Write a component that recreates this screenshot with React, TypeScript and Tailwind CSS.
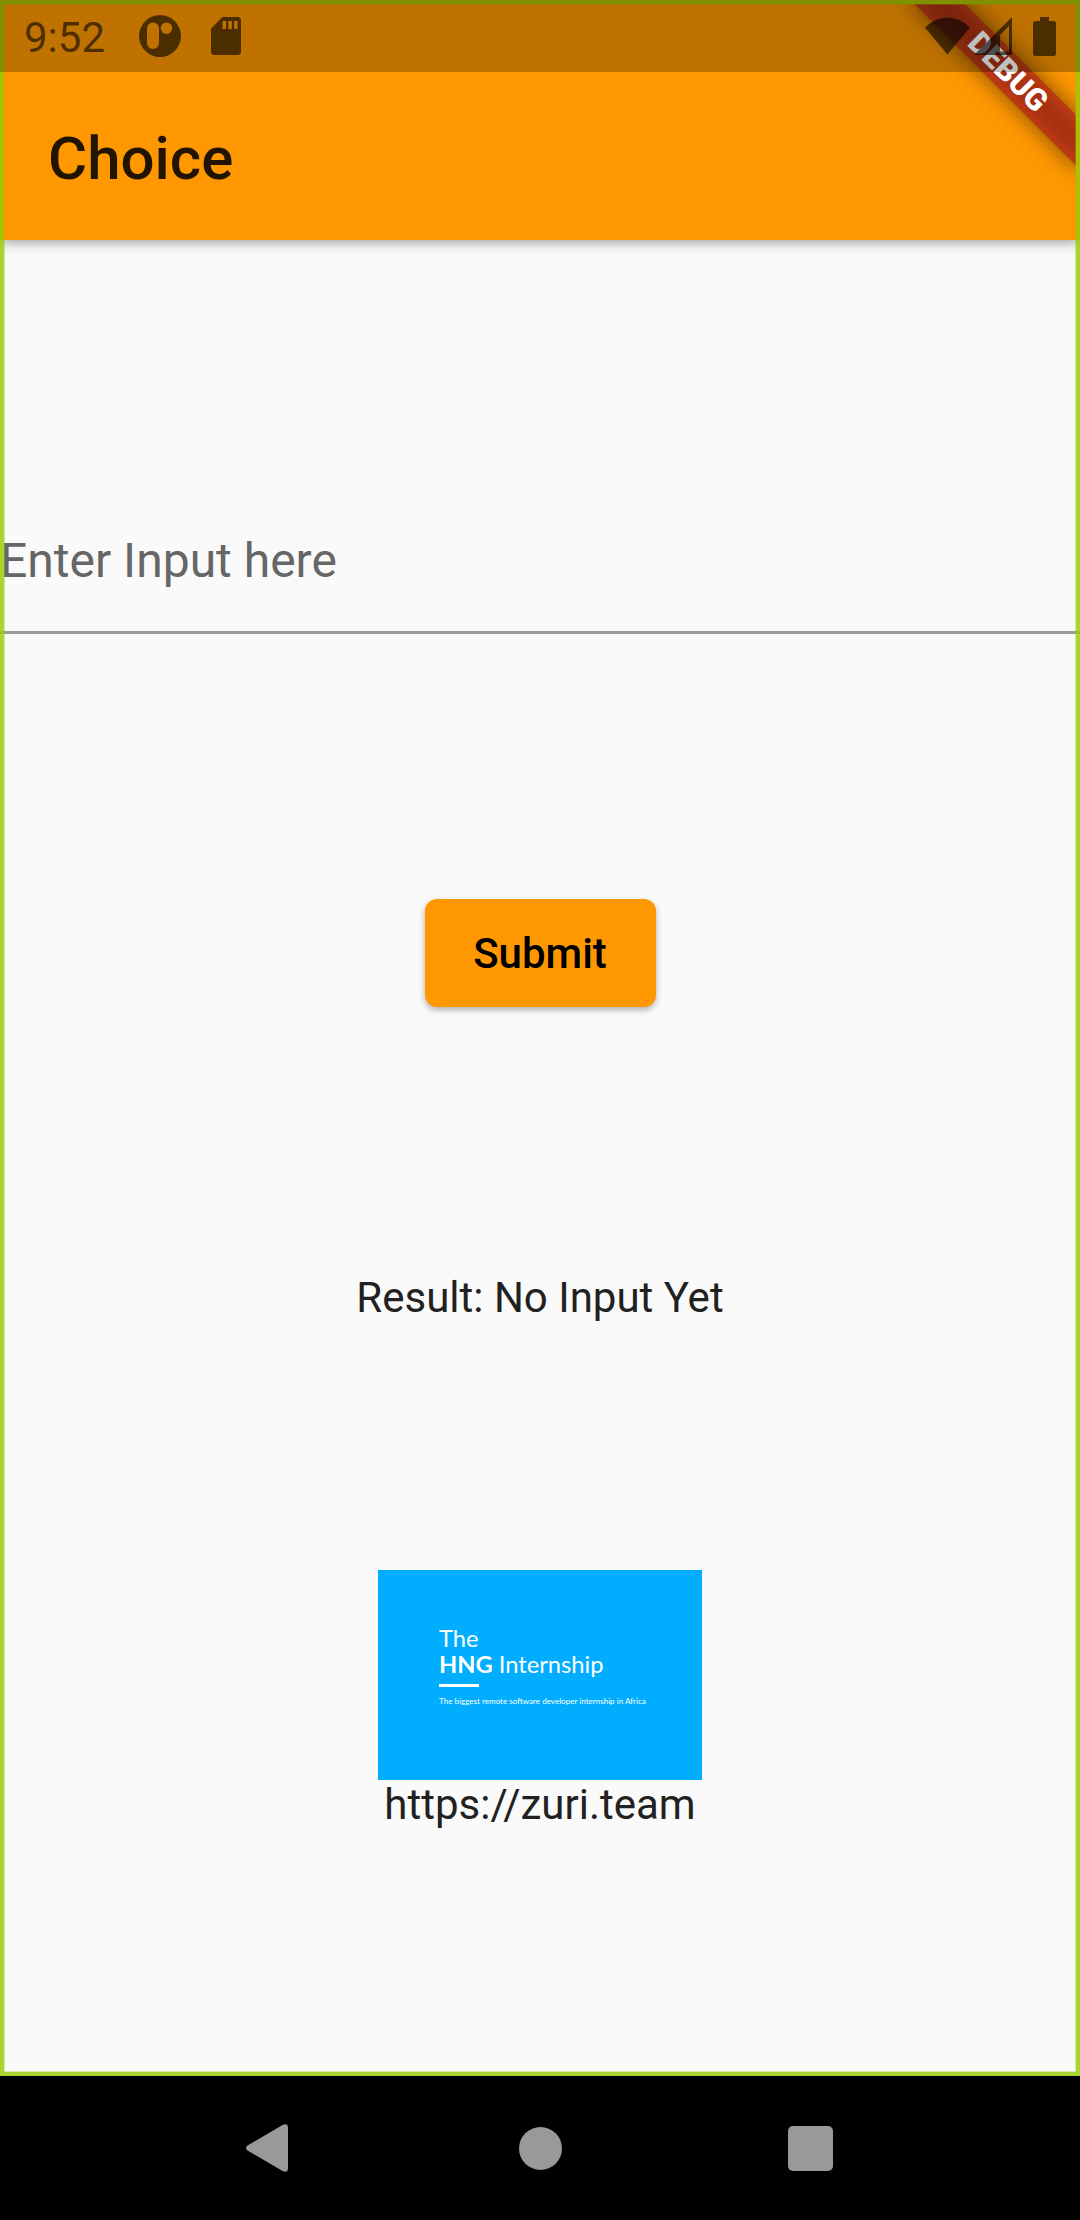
function StatusBar() {
  return (
    <div className="absolute inset-x-0 top-0 z-30 flex h-[72px] items-center bg-black/25 text-black/60">
      <span className="ml-[24px] w-[82px] whitespace-nowrap pt-[3px] text-[42px] leading-[48px]">9:52</span>
      <svg className="ml-[33px] h-[42px] w-[42px]" viewBox="0 0 42 42" fill="currentColor">
        <path
          fillRule="evenodd"
          d="M21 0A21 21 0 1 1 21 42A21 21 0 1 1 21 0ZM14 7.500A6 6 0 0 0 8 13.500V28A6 6 0 0 0 20 28V13.500A6 6 0 0 0 14 7.500ZM27.500 7.500A5.700 5.700 0 1 0 27.500 19A5.700 5.700 0 1 0 27.500 7.500Z"
        />
      </svg>
      <svg className="ml-[30px] h-[38px] w-[30px]" viewBox="0 0 30 38" fill="currentColor">
        <path
          fillRule="evenodd"
          d="M11.500 0H26.500Q30 0 30 3.500V34.500Q30 38 26.500 38H3.500Q0 38 0 34.500V11.500ZM11.500 4V12H15V4ZM17.300 4V12H20.800V4ZM23.100 4V12H26.500V4Z"
        />
      </svg>
      <svg className="mb-px ml-auto h-[38px] w-[45px]" viewBox="0 0 45 38" fill="currentColor">
        <path d="M0 10.500Q10 0.500 22.500 0.500T45 10.500L22.500 37.500Z" />
      </svg>
      <svg className="mb-px ml-[4px] h-[38px] w-[38px]" viewBox="0 0 38 38" fill="currentColor">
        <path fillRule="evenodd" d="M38 0V38H0ZM35 9L26 18V34.500H35Z" />
      </svg>
      <svg className="ml-[21px] mr-[24px] h-[39px] w-[23px]" viewBox="0 0 23 39" fill="currentColor">
        <path d="M7 0H16V4H20.500Q23 4 23 6.500V36.500Q23 39 20.500 39H2.500Q0 39 0 36.500V6.500Q0 4 2.500 4H7Z" />
      </svg>
    </div>
  );
}

function DebugRibbon() {
  return (
    <div className="pointer-events-none absolute right-1 top-1 z-10 h-[236px] w-[236px] overflow-hidden">
      <div className="absolute left-[120px] top-[80px] h-[36px] w-[240px] origin-[120px_-84px] rotate-45">
        <div className="absolute inset-0 bg-black/50 blur-[12px]" />
        <div className="relative flex h-full items-center justify-center bg-[#b71c1c]/63 text-[30.6px] font-black leading-none text-white">
          DEBUG
        </div>
      </div>
    </div>
  );
}

function InternshipCard() {
  return (
    <div className="mt-[248px] h-[210px] w-[324px] bg-[#00adff] pl-[61px] pt-[55px] font-[Lato] text-white">
      <p className="text-[23.7px] leading-[26px]">The</p>
      <p className="whitespace-nowrap text-[23.7px] leading-[26px]">
        <b className="font-bold">HNG</b> Internship
      </p>
      <div className="mt-[7px] h-[3px] w-[40px] bg-white" />
      <p className="mt-[9px] whitespace-nowrap text-[8.07px] leading-[10px]">
        The biggest remote software developer internship in Africa
      </p>
    </div>
  );
}

function NavigationBar() {
  return (
    <nav className="flex h-[144px] items-center bg-black px-[135px] text-[#999999]">
      <div className="flex w-[270px] justify-center">
        <svg className="mr-[6px] h-[48px] w-[42px]" viewBox="0 0 42 48" fill="currentColor">
          <path d="M1.500 21.500L37 0.700Q42 -1 42 4V44Q42 49 37 47.300L1.500 26.500Q-1.500 24 1.500 21.500Z" />
        </svg>
      </div>
      <div className="flex w-[270px] justify-center">
        <div className="h-[43px] w-[43px] rounded-full bg-[#999999]" />
      </div>
      <div className="flex w-[270px] justify-center">
        <div className="h-[45px] w-[45px] rounded-[5px] bg-[#999999]" />
      </div>
    </nav>
  );
}

export default function App() {
  return (
    <div className="flex h-[2220px] w-[1080px] flex-col overflow-hidden bg-black font-[Roboto,sans-serif]">
      <div className="relative flex h-[2076px] flex-col overflow-hidden bg-[#fafafa]">
        <header className="flex h-[240px] shrink-0 items-center bg-[#ff9800] pl-[48px] pt-[78px] shadow-[0_2px_12px_rgba(0,0,0,0.4)]">
          <h1 className="text-[60px] font-medium leading-[72px] text-black/87">Choice</h1>
        </header>
        <main className="flex flex-col items-center text-[#212121]">
          <div className="mt-[293px] h-[101px] w-full border-b-[3px] border-[#9b9b9b] text-[48px] leading-[56px] text-[#666666]">
            Enter Input here
          </div>
          <button className="mt-[265px] h-[108px] w-[231px] rounded-[12px] bg-[#ff9800] text-[42px] font-medium text-black shadow-[0_3px_6px_rgba(0,0,0,0.3)]">
            Submit
          </button>
          <p className="mt-[267px] text-[42px] leading-[48px]">Result: No Input Yet</p>
          <InternshipCard />
          <p className="text-[42px] leading-[50px]">https://zuri.team</p>
        </main>
        <DebugRibbon />
        <div className="pointer-events-none absolute inset-0 z-20 border-4 border-[#96ca00]/80 shadow-[inset_0_0_0_1px_rgba(150,202,0,0.35)]" />
        <StatusBar />
      </div>
      <NavigationBar />
    </div>
  );
}
